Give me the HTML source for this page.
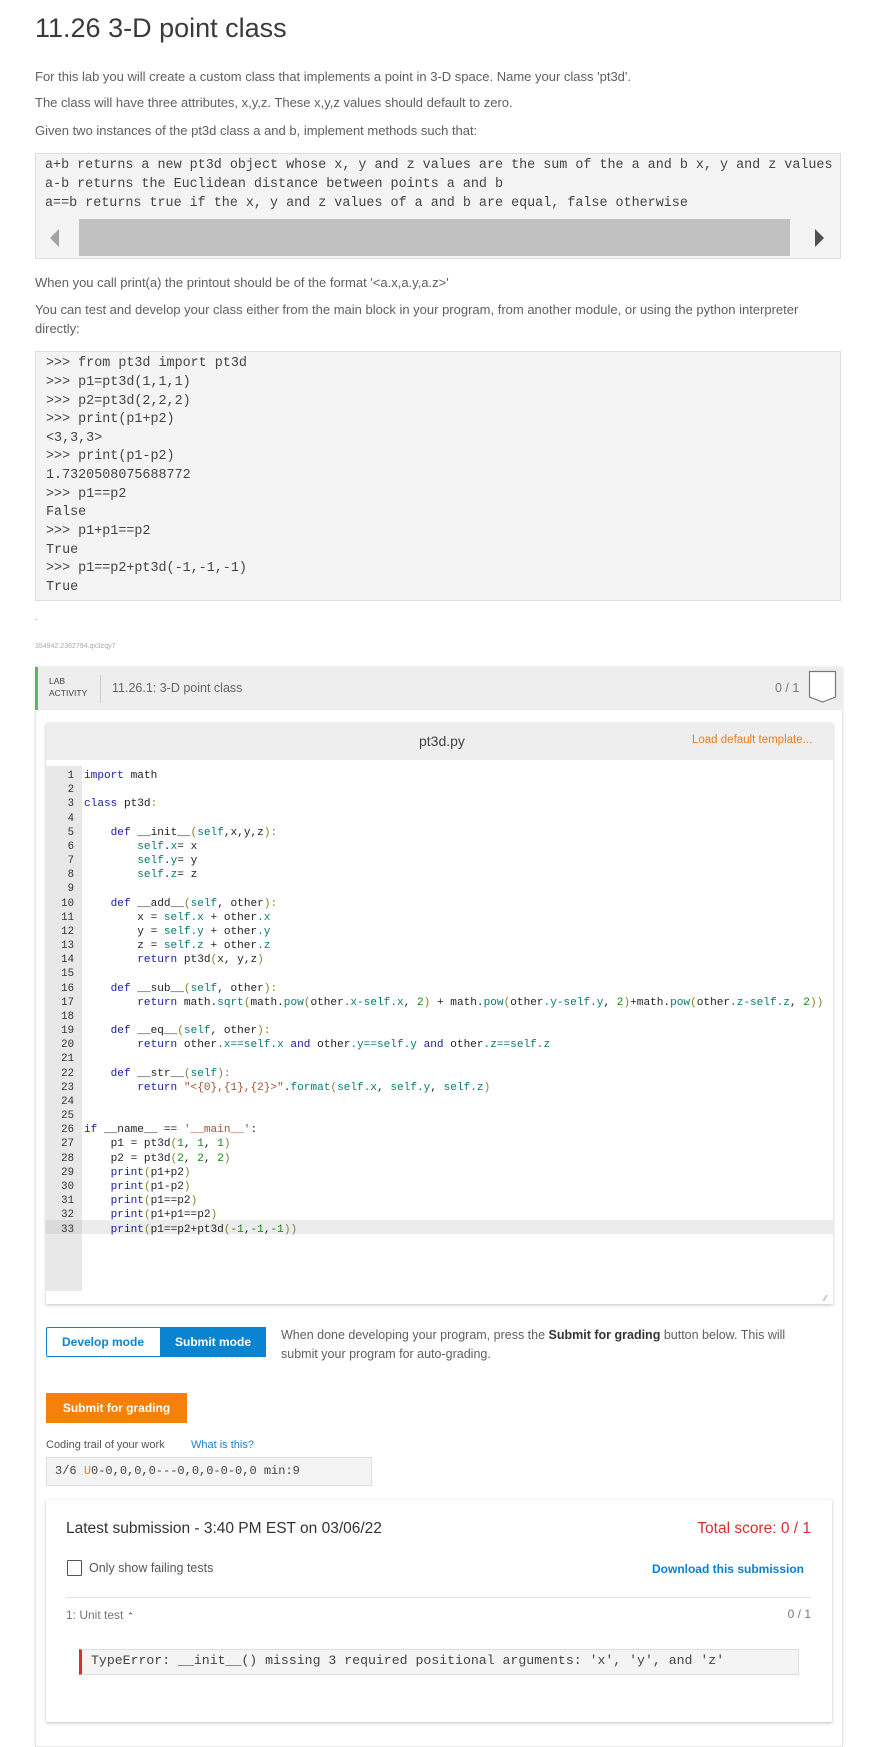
<!DOCTYPE html>
<html><head><meta charset="utf-8"><style>
*{margin:0;padding:0;box-sizing:border-box}
body{width:885px;height:1740px;background:#fff;font-family:"Liberation Sans",sans-serif;color:#5a5a5a;position:relative;overflow:hidden}
.a{position:absolute;white-space:nowrap}
.p{font-size:13px;color:#5f5f5f}
.mono{font-family:"Liberation Mono",monospace}
.pre{position:absolute;left:35px;width:806px;background:#f4f4f4;border:1px solid #ddd}
.pre div{position:absolute;left:10px;font-family:"Liberation Mono",monospace;font-size:13.4px;color:#444;white-space:pre}
.code{position:absolute;left:84px;font-family:"Liberation Mono",monospace;font-size:11.1px;white-space:pre;color:#222;line-height:14.17px}
.ln{position:absolute;left:46px;width:32px;text-align:right;font-family:"Liberation Mono",monospace;font-size:10.7px;line-height:14.17px;color:#333}
.k{color:#1a1aa6}.s{color:#0a7a6e}.n{color:#118811}.q{color:#a0522d}.b{color:#8a8030}
</style></head><body>
<div class="a" style="left:35px;top:13px;font-size:27px;color:#3a3a3a">11.26 3-D point class</div>
<div class="a p" style="left:35px;top:69px">For this lab you will create a custom class that implements a point in 3-D space. Name your class 'pt3d'.</div>
<div class="a p" style="left:35px;top:95px">The class will have three attributes, x,y,z. These x,y,z values should default to zero.</div>
<div class="a p" style="left:35px;top:123px">Given two instances of the pt3d class a and b, implement methods such that:</div>
<div class="pre" style="top:153px;height:106px">
<div style="top:4px;left:9px">a+b returns a new pt3d object whose x, y and z values are the sum of the a and b x, y and z values</div>
<div style="top:23px;left:9px">a-b returns the Euclidean distance between points a and b</div>
<div style="top:42px;left:9px">a==b returns true if the x, y and z values of a and b are equal, false otherwise</div>
<div style="top:65px;left:43px;width:711px;height:37px;background:#c1c1c1"></div>
<div style="top:75px;left:14px;width:0;height:0;border-top:9px solid transparent;border-bottom:9px solid transparent;border-right:9px solid #a3a3a3"></div>
<div style="top:75px;left:779px;width:0;height:0;border-top:9px solid transparent;border-bottom:9px solid transparent;border-left:9px solid #505050"></div>
</div>
<div class="a p" style="left:35px;top:275px">When you call print(a) the printout should be of the format '&lt;a.x,a.y,a.z&gt;'</div>
<div class="a p" style="left:35px;top:302px">You can test and develop your class either from the main block in your program, from another module, or using the python interpreter</div>
<div class="a p" style="left:35px;top:321px">directly:</div>
<div class="pre" style="top:351px;height:250px">
<div style="top:4px">&gt;&gt;&gt; from pt3d import pt3d</div>
<div style="top:23px">&gt;&gt;&gt; p1=pt3d(1,1,1)</div>
<div style="top:42px">&gt;&gt;&gt; p2=pt3d(2,2,2)</div>
<div style="top:60px">&gt;&gt;&gt; print(p1+p2)</div>
<div style="top:79px">&lt;3,3,3&gt;</div>
<div style="top:97px">&gt;&gt;&gt; print(p1-p2)</div>
<div style="top:116px">1.7320508075688772</div>
<div style="top:135px">&gt;&gt;&gt; p1==p2</div>
<div style="top:153px">False</div>
<div style="top:172px">&gt;&gt;&gt; p1+p1==p2</div>
<div style="top:191px">True</div>
<div style="top:209px">&gt;&gt;&gt; p1==p2+pt3d(-1,-1,-1)</div>
<div style="top:228px">True</div>
</div>
<div class="a" style="left:35px;top:612px;font-size:10px;color:#999">.</div>
<div class="a" style="left:35px;top:643px;font-size:7px;color:#aaa">354942.2362794.qx3zqy7</div>

<!-- lab box -->
<div class="a" style="left:35px;top:667px;width:808px;height:1080px;border:1px solid #e6e6e6;box-shadow:0 0 2px #ddd"></div>
<div class="a" style="left:35px;top:667px;width:808px;height:43px;background:#eee;border-left:3px solid #5cb85c"></div>
<div class="a" style="left:49px;top:675px;font-size:8.5px;color:#444;line-height:12px">LAB<br>ACTIVITY</div>
<div class="a" style="left:100px;top:675px;width:1px;height:28px;background:#ccc"></div>
<div class="a" style="left:112px;top:681px;font-size:12.5px;color:#666">11.26.1: 3-D point class</div>
<div class="a" style="left:775px;top:681px;font-size:12.5px;color:#777">0 / 1</div>
<svg class="a" style="left:808px;top:670px" width="30" height="34"><path d="M1.5 1.5H27.5V27L14.5 32L1.5 27Z" fill="#fff" stroke="#777" stroke-width="1.2"/></svg>

<!-- editor -->
<div class="a" style="left:46px;top:723px;width:787px;height:581px;background:#fff;box-shadow:0 1px 3px rgba(0,0,0,.25)"></div>
<div class="a" style="left:46px;top:723px;width:787px;height:37px;background:#eee"></div>
<div class="a" style="left:419px;top:733px;font-size:14px;color:#444">pt3d.py</div>
<div class="a" style="left:692px;top:734px;font-size:11.5px;color:#f47b10">Load default template...</div>
<div class="a" style="left:46px;top:766px;width:36px;height:525px;background:#e8e8e8"></div>
<div class="a" style="left:82px;top:1220px;width:751px;height:14px;background:#ececec"></div>
<div class="a" style="left:46px;top:1220px;width:36px;height:14px;background:#dadada"></div>
<div class="ln" style="top:769px;left:42px"><div>1</div><div>2</div><div>3</div><div>4</div><div>5</div><div>6</div><div>7</div><div>8</div><div>9</div><div>10</div><div>11</div><div>12</div><div>13</div><div>14</div><div>15</div><div>16</div><div>17</div><div>18</div><div>19</div><div>20</div><div>21</div><div>22</div><div>23</div><div>24</div><div>25</div><div>26</div><div>27</div><div>28</div><div>29</div><div>30</div><div>31</div><div>32</div><div>33</div></div>
<div class="code" style="top:769px"><span class="k">import</span> math

<span class="k">class</span> pt3d<span class="b">:</span>

    <span class="k">def</span> __init__<span class="b">(</span><span class="s">self</span>,x,y,z<span class="b">):</span>
        <span class="s">self</span>.<span class="s">x</span>= x
        <span class="s">self</span>.<span class="s">y</span>= y
        <span class="s">self</span>.<span class="s">z</span>= z

    <span class="k">def</span> __add__<span class="b">(</span><span class="s">self</span>, other<span class="b">):</span>
        x = <span class="s">self.x</span> + other<span class="s">.x</span>
        y = <span class="s">self.y</span> + other<span class="s">.y</span>
        z = <span class="s">self.z</span> + other<span class="s">.z</span>
        <span class="k">return</span> pt3d<span class="b">(</span>x, y,z<span class="b">)</span>

    <span class="k">def</span> __sub__<span class="b">(</span><span class="s">self</span>, other<span class="b">):</span>
        <span class="k">return</span> math.<span class="s">sqrt</span><span class="b">(</span>math.<span class="s">pow</span><span class="b">(</span>other<span class="s">.x-self.x</span>, <span class="n">2</span><span class="b">)</span> + math.<span class="s">pow</span><span class="b">(</span>other<span class="s">.y-self.y</span>, <span class="n">2</span><span class="b">)</span>+math.<span class="s">pow</span><span class="b">(</span>other<span class="s">.z-self.z</span>, <span class="n">2</span><span class="b">))</span>

    <span class="k">def</span> __eq__<span class="b">(</span><span class="s">self</span>, other<span class="b">):</span>
        <span class="k">return</span> other<span class="s">.x==self.x</span> <span class="k">and</span> other<span class="s">.y==self.y</span> <span class="k">and</span> other<span class="s">.z==self.z</span>

    <span class="k">def</span> __str__<span class="b">(</span><span class="s">self</span><span class="b">):</span>
        <span class="k">return</span> <span class="q">"&lt;{0},{1},{2}&gt;"</span>.<span class="s">format</span><span class="b">(</span><span class="s">self.x</span>, <span class="s">self.y</span>, <span class="s">self.z</span><span class="b">)</span>


<span class="k">if</span> __name__ == <span class="q">'__main__'</span>:
    p1 = pt3d<span class="b">(</span><span class="n">1</span>, <span class="n">1</span>, <span class="n">1</span><span class="b">)</span>
    p2 = pt3d<span class="b">(</span><span class="n">2</span>, <span class="n">2</span>, <span class="n">2</span><span class="b">)</span>
    <span class="k">print</span><span class="b">(</span>p1+p2<span class="b">)</span>
    <span class="k">print</span><span class="b">(</span>p1-p2<span class="b">)</span>
    <span class="k">print</span><span class="b">(</span>p1==p2<span class="b">)</span>
    <span class="k">print</span><span class="b">(</span>p1+p1==p2<span class="b">)</span>
    <span class="k">print</span><span class="b">(</span>p1==p2+pt3d<span class="b">(</span><span class="n">-1</span>,<span class="n">-1</span>,<span class="n">-1</span><span class="b">))</span></div>
<div class="a" style="left:824px;top:1294px;font-size:8px;color:#999">⁄⁄</div>

<!-- buttons -->
<div class="a" style="left:46px;top:1327px;width:220px;height:30px;border:1px solid #0a84d0;border-radius:2px"></div>
<div class="a" style="left:46px;top:1327px;width:114px;height:30px;font-size:12px;font-weight:bold;color:#0a84d0;text-align:center;line-height:30px">Develop mode</div>
<div class="a" style="left:160px;top:1327px;width:106px;height:30px;background:#0a84d0;font-size:12px;font-weight:bold;color:#fff;text-align:center;line-height:30px">Submit mode</div>
<div class="a p" style="left:281px;top:1326px;line-height:19px;font-size:12.5px">When done developing your program, press the <b style="color:#333">Submit for grading</b> button below. This will<br>submit your program for auto-grading.</div>
<div class="a" style="left:46px;top:1393px;width:141px;height:30px;background:#f6810a;color:#fff;font-size:12px;font-weight:bold;line-height:30px;text-align:center">Submit for grading</div>
<div class="a" style="left:46px;top:1439px;font-size:11px;color:#555">Coding trail of your work</div>
<div class="a" style="left:191px;top:1439px;font-size:11px;color:#1a7fd0">What is this?</div>
<div class="a" style="left:46px;top:1457px;width:326px;height:29px;background:#f4f4f4;border:1px solid #ddd"></div>
<div class="a mono" style="left:55px;top:1464px;font-size:12px;color:#444">3/6 <span style="color:#f47b10">U</span>0-0,0,0,0---0,0,0-0-0,0 min:9</div>

<!-- results -->
<div class="a" style="left:46px;top:1500px;width:786px;height:222px;background:#fff;box-shadow:0 1px 3px rgba(0,0,0,.25)"></div>
<div class="a" style="left:66px;top:1520px;font-size:15.5px;color:#333">Latest submission - 3:40 PM EST on 03/06/22</div>
<div class="a" style="right:74px;top:1520px;font-size:15.5px;color:#d9302c">Total score: 0 / 1</div>
<div class="a" style="left:67px;top:1560px;width:15px;height:16px;border:1px solid #555;border-radius:1px"></div>
<div class="a" style="left:89px;top:1561px;font-size:12.5px;color:#555">Only show failing tests</div>
<div class="a" style="right:81px;top:1562px;font-size:12px;font-weight:bold;color:#0a7fd0">Download this submission</div>
<div class="a" style="left:66px;top:1597px;width:745px;height:1px;background:#e4e4e4"></div>
<div class="a" style="left:66px;top:1608px;font-size:12px;color:#777">1: Unit test <span style="font-size:9px;color:#444">⌃</span></div>
<div class="a" style="right:74px;top:1607px;font-size:12px;color:#777">0 / 1</div>
<div class="a" style="left:79px;top:1649px;width:720px;height:26px;background:#f4f4f4;border:1px solid #ddd;border-left:3px solid #d9302c"></div>
<div class="a mono" style="left:91px;top:1653px;font-size:13.2px;color:#444">TypeError: __init__() missing 3 required positional arguments: 'x', 'y', and 'z'</div>
</body></html>
